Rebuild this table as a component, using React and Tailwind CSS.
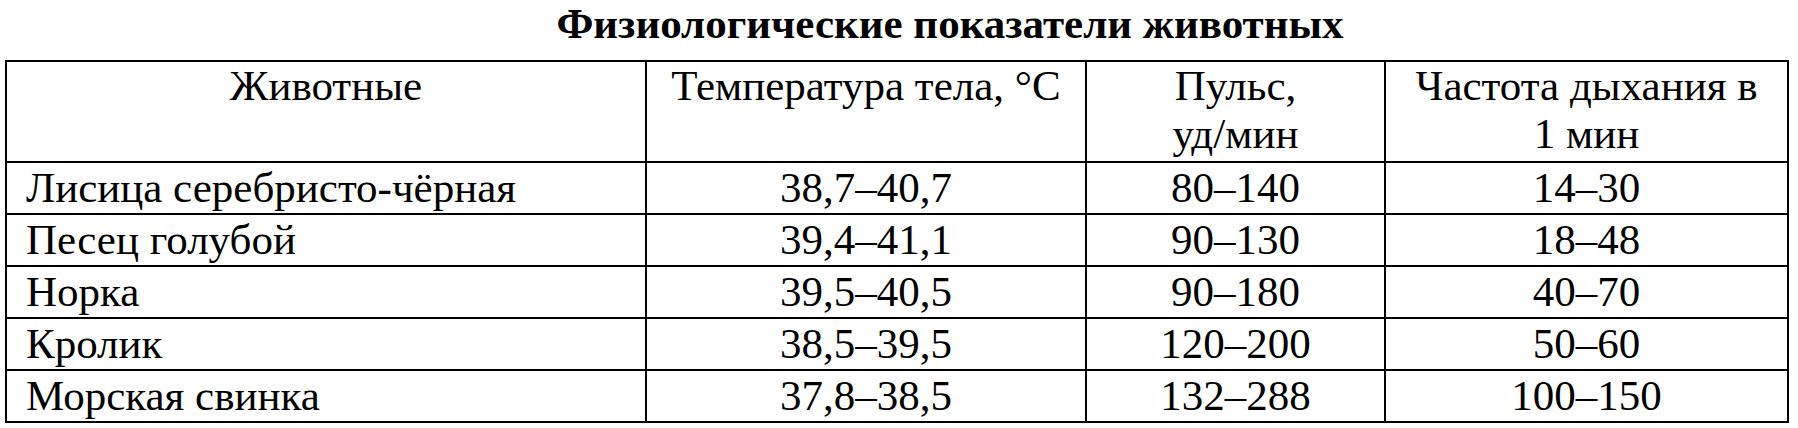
import React from 'react';

const rows = [
  ['Лисица серебристо-чёрная', '38,7–40,7', '80–140', '14–30'],
  ['Песец голубой', '39,4–41,1', '90–130', '18–48'],
  ['Норка', '39,5–40,5', '90–180', '40–70'],
  ['Кролик', '38,5–39,5', '120–200', '50–60'],
  ['Морская свинка', '37,8–38,5', '132–288', '100–150'],
];

const App = () => {
  return (
    <div className="w-[1798px] h-[428px] bg-white text-black overflow-hidden font-['Liberation_Serif']">
      {/* Title */}
      <h1 className="pl-[102px] text-center font-bold text-[43px] leading-[48px] h-[60px]">
        Физиологические показатели животных
      </h1>

      {/* Table */}
      <table className="ml-[5px] w-[1784px] table-fixed border-collapse text-[43px] leading-[50px]">
        <colgroup>
          <col className="w-[640px]" />
          <col className="w-[440px]" />
          <col className="w-[299px]" />
          <col className="w-[403px]" />
        </colgroup>
        <thead>
          <tr className="h-[101px] leading-[48px]">
            <th className="border-2 border-black font-normal align-top text-center p-0">Животные</th>
            <th className="border-2 border-black font-normal align-top text-center p-0">Температура тела, °C</th>
            <th className="border-2 border-black font-normal align-top text-center p-0">
              Пульс,<br />уд/мин
            </th>
            <th className="border-2 border-black font-normal align-top text-center p-0">
              Частота дыхания в<br />1 мин
            </th>
          </tr>
        </thead>
        <tbody>
          {rows.map((r) => (
            <tr key={r[0]} className="h-[52px]">
              <td className="border-2 border-black pl-[19px] py-0 text-left">{r[0]}</td>
              <td className="border-2 border-black p-0 text-center">{r[1]}</td>
              <td className="border-2 border-black p-0 text-center">{r[2]}</td>
              <td className="border-2 border-black p-0 text-center">{r[3]}</td>
            </tr>
          ))}
        </tbody>
      </table>
    </div>
  );
};

export default App;
